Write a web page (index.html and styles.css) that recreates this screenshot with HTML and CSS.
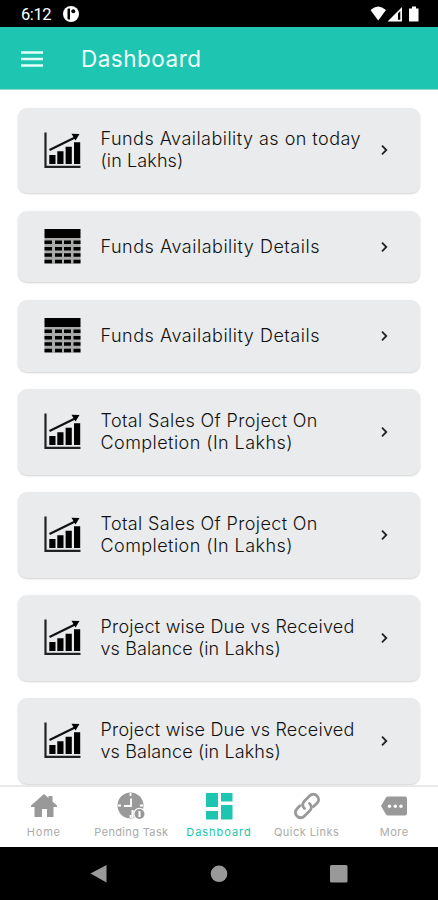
FILE: index.html
```html
<!DOCTYPE html>
<html lang="en">
<head>
    <meta charset="UTF-8">
    <meta name="viewport" content="width=device-width, initial-scale=1.0">
    <title>Dashboard</title>
    <link rel="stylesheet" href="styles.css">
</head>
<body>
    <!-- shared icons -->
    <svg class="sprite" width="0" height="0">
        <symbol id="chart" viewBox="0 0 37 37">
            <path d="M1.500 0.500V34.800H36.500" fill="none" stroke="#222" stroke-width="2.200"/>
            <path d="M5.300 23h6.200v9H5.300zM13.300 19.300h6.200V32h-6.200zM21.600 14.700h6.200V32h-6.200zM30 10.200h6.200V32H30z"/>
            <path d="M5.500 18L31 5.500" fill="none" stroke="#111" stroke-width="2.200"/>
            <path d="M27.500 1.800L35.500 2L31.500 8.500z"/>
        </symbol>
        <symbol id="table" viewBox="0 0 37 37">
            <path fill="#a8a9a9" d="M.5 10h36v26H.5z"/>
            <path d="M.5 1h36v9H.5zM.5 12.500H8V16H.500zM11 12.500h7V16h-7zM20 12.500h7V16h-7zM29.500 12.500h7V16h-7zM.5 19H8v3.500H.500zM11 19h7v3.500h-7zM20 19h7v3.500h-7zM29.500 19h7v3.500h-7zM.5 25.300H8v3.500H.500zM11 25.300h7v3.500h-7zM20 25.300h7v3.500h-7zM29.500 25.300h7v3.500h-7zM.5 31.800H8v3.500H.500zM11 31.800h7v3.500h-7zM20 31.800h7v3.500h-7zM29.500 31.800h7v3.500h-7z"/>
        </symbol>
        <symbol id="arrow" viewBox="0 0 8 12">
            <path d="M2 1.700L6.300 6L2 10.300" fill="none" stroke="#222" stroke-width="1.800"/>
        </symbol>
    </svg>

    <div class="status-bar">
        <span class="time">6:12</span>
        <svg class="app-badge" width="16" height="16" viewBox="0 0 16 16">
            <circle cx="8" cy="8" r="8" fill="#fff"/>
            <path d="M4.500 3.500q0-1 1-1H7v11H5.500q-1 0-1-1z"/>
            <circle cx="10.300" cy="5.200" r="2"/>
        </svg>
        <svg class="signals" width="50" height="16" viewBox="0 0 50 16" fill="#fff">
            <path d="M0.500 4Q8 -3 16 4L8.200 14.500z"/>
            <path fill-rule="evenodd" d="M32 1V15.500H17.500zM30.300 5L28 7.500V13.800h2.300z"/>
            <path d="M42 0.500h4v2h2.500v13h-9.500v-13H42z"/>
        </svg>
    </div>

    <header class="header">
        <svg width="22" height="16" viewBox="0 0 22 16">
            <path d="M0 1.500h22M0 8h22M0 14.500h22" stroke="#e4fffa" stroke-width="2.300"/>
        </svg>
        <h1>Dashboard</h1>
    </header>

    <main class="content">
        <div class="card">
            <svg class="icon"><use href="#chart"/></svg>
            <p><span class="funds-today">Funds Availability as on today</span><br><span class="lakhs">(in Lakhs)</span></p>
            <svg class="arrow"><use href="#arrow"/></svg>
        </div>
        <div class="card small">
            <svg class="icon"><use href="#table"/></svg>
            <p><span class="details">Funds Availability Details</span></p>
            <svg class="arrow"><use href="#arrow"/></svg>
        </div>
        <div class="card small">
            <svg class="icon"><use href="#table"/></svg>
            <p><span class="details">Funds Availability Details</span></p>
            <svg class="arrow"><use href="#arrow"/></svg>
        </div>
        <div class="card">
            <svg class="icon"><use href="#chart"/></svg>
            <p><span class="sales">Total Sales Of Project On</span><br><span class="completion">Completion (In Lakhs)</span></p>
            <svg class="arrow"><use href="#arrow"/></svg>
        </div>
        <div class="card">
            <svg class="icon"><use href="#chart"/></svg>
            <p><span class="sales">Total Sales Of Project On</span><br><span class="completion">Completion (In Lakhs)</span></p>
            <svg class="arrow"><use href="#arrow"/></svg>
        </div>
        <div class="card">
            <svg class="icon"><use href="#chart"/></svg>
            <p><span class="due">Project wise Due vs Received</span><br><span class="balance">vs Balance (in Lakhs)</span></p>
            <svg class="arrow"><use href="#arrow"/></svg>
        </div>
        <div class="card">
            <svg class="icon"><use href="#chart"/></svg>
            <p><span class="due">Project wise Due vs Received</span><br><span class="balance">vs Balance (in Lakhs)</span></p>
            <svg class="arrow"><use href="#arrow"/></svg>
        </div>
    </main>

    <nav class="tabs">
        <div class="tab">
            <svg width="28" height="28" viewBox="0 0 28 28">
                <path d="M14 2L18.500 6V4h4v5.500L27 13.500V15h-3.500v10H17v-8h-5v8H4.500V15H1v-1.500z"/>
            </svg>
            <span class="home">Home</span>
        </div>
        <div class="tab">
            <svg width="28" height="28" viewBox="0 0 28 28">
                <circle cx="13.500" cy="13.500" r="13"/>
                <path d="M13.500 1v3M1 13.500h3M23 13.500h3M13.500 23v3M14 6.500v7.500H7" fill="none" stroke="#fff" stroke-width="1.800"/>
                <circle cx="22.500" cy="22" r="6.300" fill="#fff"/>
                <circle cx="22.500" cy="22" r="5"/>
                <path d="M22.500 19v6" stroke="#fff" stroke-width="2"/>
                <path d="M15.500 18v8" stroke="#fff" stroke-width="2"/>
            </svg>
            <span class="pending">Pending Task</span>
        </div>
        <div class="tab active">
            <svg width="28" height="28" viewBox="0 0 28 28">
                <path d="M1 1h12v14H1zM1 19h12v8.500H1zM16 1h11.500v8.500H16zM16 13h11.500v14.500H16z"/>
            </svg>
            <span class="dash">Dashboard</span>
        </div>
        <div class="tab">
            <svg width="28" height="28" viewBox="0 0 28 28">
                <g fill="none" stroke="#999" stroke-width="2.800" stroke-linecap="round" stroke-linejoin="round">
                    <path d="M11.500 16.500C8.500 13.500 9.500 11 11.500 9L16.500 4C19 1.500 22 1.800 24 4C26.300 6.300 26 9.200 24 11.200L20.500 14.500"/>
                    <path d="M16.500 11.500C19.500 14.500 18.500 17 16.500 19L11.500 24C9 26.500 6 26.200 4 24C1.700 21.700 2 18.800 4 16.800L7 13.800"/>
                </g>
            </svg>
            <span class="links">Quick Links</span>
        </div>
        <div class="tab">
            <svg width="28" height="28" viewBox="0 0 28 28">
                <path d="M8 4.500h17q2 0 2 2v15q0 2-2 2H8q-1.200 0-2-1L1 14L6 5.500q.8-1 2-1z"/>
                <g fill="#fff">
                    <circle cx="9.500" cy="14.200" r="1.700"/>
                    <circle cx="15.300" cy="14.200" r="1.700"/>
                    <circle cx="21" cy="14.200" r="1.700"/>
                </g>
            </svg>
            <span class="more">More</span>
        </div>
    </nav>

    <footer class="system-nav">
        <svg width="18" height="20" viewBox="0 0 18 20"><path d="M0.500 9.500L16.500 1V18.500z"/></svg>
        <svg width="18" height="20" viewBox="0 0 18 20"><circle cx="9" cy="9.800" r="8.300"/></svg>
        <svg width="18" height="20" viewBox="0 0 18 20"><rect x="0" y="1" width="17.500" height="17.500" rx="1.500"/></svg>
    </footer>
</body>
</html>
```
FILE: styles.css
```css
* {
    box-sizing: border-box;
}
body {
    margin: 0;
    height: 900px;
    display: flex;
    flex-direction: column;
    overflow: hidden;
    background-color: #fff;
    font-family: Inter, "Open Sans", sans-serif;
}
.sprite {
    position: absolute;
}
.status-bar {
    flex: none;
    height: 27px;
    display: flex;
    align-items: center;
    padding: 1px 18px 0 21px;
    background-color: #000;
    color: #fff;
}
.time {
    width: 42px;
    font-family: Roboto, sans-serif;
    font-size: 16.5px;
    font-weight: 400;
    letter-spacing: -0.4px;
}
.signals {
    margin-left: auto;
}
.header {
    flex: none;
    height: 63px;
    display: flex;
    align-items: center;
    gap: 38px;
    padding: 1px 21px 0;
    background-color: #1ec5b0;
    border-bottom: 1px solid #8fd8cd;
    color: #f0fffc;
}
.header h1 {
    margin: 0;
    font-size: 22.5px;
    font-weight: 400;
    letter-spacing: 0.5px;
}
.content {
    flex: none;
    height: 695px;
    display: flex;
    flex-direction: column;
    gap: 17.6px;
    padding: 17.7px 18px 0;
    overflow: hidden;
}
.card {
    flex: none;
    height: 85.4px;
    display: flex;
    align-items: center;
    padding: 0 32px 0 26px;
    border-radius: 9px;
    background-color: #e9ebec;
    box-shadow: 0 1px 2px rgba(0, 0, 0, 0.18);
}
.card.small {
    height: 71.7px;
}
.icon {
    flex: none;
    width: 37px;
    height: 37px;
}
.card p {
    flex: 1;
    margin: 0 0 0 19.5px;
    font-size: 18px;
    font-weight: 300;
    line-height: 22px;
    color: #111;
    white-space: nowrap;
}
.funds-today {
    letter-spacing: 0.47px;
}
.lakhs {
    letter-spacing: 0.1px;
}
.details {
    letter-spacing: 0.52px;
}
.sales {
    letter-spacing: 0.37px;
}
.completion {
    letter-spacing: 0.44px;
}
.due {
    letter-spacing: 0.23px;
}
.balance {
    letter-spacing: 0.11px;
}
.arrow {
    flex: none;
    width: 8px;
    height: 12px;
}
.tabs {
    flex: none;
    height: 62px;
    display: flex;
    border-top: 2px solid #e9e9e9;
    background-color: #fff;
}
.tab {
    flex: 1;
    display: flex;
    flex-direction: column;
    align-items: center;
    padding-top: 5px;
    font-size: 11px;
    line-height: 14px;
    color: #aaa;
    white-space: nowrap;
}
.tab svg {
    flex: none;
    margin-bottom: 5px;
    fill: #999;
}
.tab.active {
    color: #1ec5a8;
}
.tab.active svg {
    fill: #1ec5b0;
}
.home {
    letter-spacing: 0.8px;
}
.pending {
    letter-spacing: 0.35px;
}
.dash {
    letter-spacing: 0.95px;
}
.links,
.more {
    letter-spacing: 0.45px;
}
.system-nav {
    flex: 1;
    display: flex;
    justify-content: space-between;
    align-items: center;
    padding: 0 90px;
    background-color: #000;
    fill: #999;
}
```
